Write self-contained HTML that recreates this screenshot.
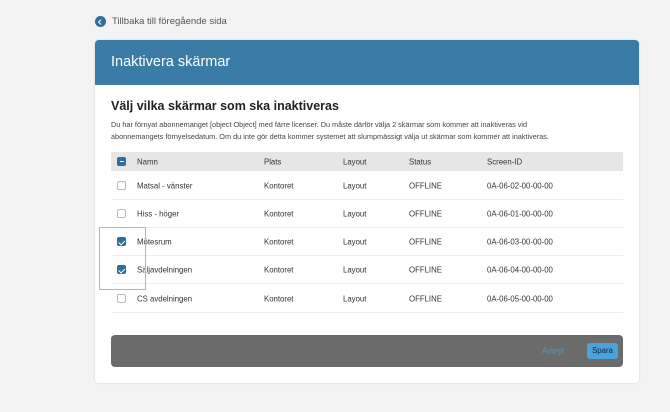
<!DOCTYPE html>
<html><head><meta charset="utf-8"><style>
*{margin:0;padding:0;box-sizing:border-box}
body{width:670px;height:412px;background:#f3f3f3;font-family:"Liberation Sans",sans-serif;position:relative;overflow:hidden;color:#333}
.abs{position:absolute}
.back{left:95px;top:16px;font-size:9.5px;color:#555;display:flex;align-items:center}
.back i{display:inline-block;width:11px;height:11px;border-radius:50%;background:#2f6f9a;margin-right:6px;position:relative}
.card{left:95px;top:40px;width:544px;height:343px;background:#fff;border-radius:4px;box-shadow:0 0 2px rgba(0,0,0,.15)}
.hdr{left:0;top:0;width:544px;height:45px;background:#3a7ca5;border-radius:4px 4px 0 0;color:#fff;font-size:14.5px;padding:14px 0 0 16px}
h2{position:absolute;left:16px;top:59px;font-size:12.5px;font-weight:bold;color:#222}
.p{left:16px;top:79px;width:492px;font-size:7.3px;line-height:12px;color:#444}
.th{left:16px;top:112px;width:512px;height:19px;background:#e6e6e6}
.row{left:16px;width:512px;height:28px;border-bottom:1px solid #eee}
.c{position:absolute;font-size:7.8px;top:50%;transform:translateY(-50%);white-space:nowrap}
.cb{position:absolute;left:6px;top:50%;margin-top:-4.5px;width:9px;height:9px;border:1px solid #bbb;border-radius:2px;background:#fff}
.cb.on{background:#2f6f9a;border-color:#2f6f9a}
.cb.on:after{content:"";position:absolute;left:2px;top:0.5px;width:2.5px;height:4.5px;border:solid #fff;border-width:0 1.3px 1.3px 0;transform:rotate(45deg)}
.cb.mi{background:#2f6f9a;border-color:#2f6f9a}
.cb.mi:after{content:"";position:absolute;left:1.5px;top:3px;width:4px;height:1.3px;background:#fff}
.foot{left:16px;top:295px;width:512px;height:32px;background:#6b6b6b;border-radius:4px}
</style></head><body>
<div class="abs back"><i><span style="position:absolute;left:3.5px;top:3.5px;width:3.5px;height:3.5px;border:solid #fff;border-width:0 0 1.3px 1.3px;transform:rotate(45deg)"></span></i>Tillbaka till föregående sida</div>
<div class="abs card">
<div class="abs hdr">Inaktivera skärmar</div>
<h2>Välj vilka skärmar som ska inaktiveras</h2>
<div class="abs p">Du har förnyat abonnemanget [object Object] med färre licenser. Du måste därför välja 2 skärmar som kommer att inaktiveras vid<br>abonnemangets förnyelsedatum. Om du inte gör detta kommer systemet att slumpmässigt välja ut skärmar som kommer att inaktiveras.</div>
<div class="abs th"><span class="cb mi"></span><span class="c" style="left:26px">Namn</span><span class="c" style="left:153px">Plats</span><span class="c" style="left:232px">Layout</span><span class="c" style="left:298px">Status</span><span class="c" style="left:376px">Screen-ID</span></div>
<div class="abs row" style="top:132px"><span class="cb"></span><span class="c" style="left:26px">Matsal - vänster</span><span class="c" style="left:153px">Kontoret</span><span class="c" style="left:232px">Layout</span><span class="c" style="left:298px">OFFLINE</span><span class="c" style="left:376px">0A-06-02-00-00-00</span></div>
<div class="abs row" style="top:160px"><span class="cb"></span><span class="c" style="left:26px">Hiss - höger</span><span class="c" style="left:153px">Kontoret</span><span class="c" style="left:232px">Layout</span><span class="c" style="left:298px">OFFLINE</span><span class="c" style="left:376px">0A-06-01-00-00-00</span></div>
<div class="abs row" style="top:188px"><span class="cb on"></span><span class="c" style="left:26px">Mötesrum</span><span class="c" style="left:153px">Kontoret</span><span class="c" style="left:232px">Layout</span><span class="c" style="left:298px">OFFLINE</span><span class="c" style="left:376px">0A-06-03-00-00-00</span></div>
<div class="abs row" style="top:216px"><span class="cb on"></span><span class="c" style="left:26px">Säljavdelningen</span><span class="c" style="left:153px">Kontoret</span><span class="c" style="left:232px">Layout</span><span class="c" style="left:298px">OFFLINE</span><span class="c" style="left:376px">0A-06-04-00-00-00</span></div>
<div class="abs row" style="top:245px"><span class="cb"></span><span class="c" style="left:26px">CS avdelningen</span><span class="c" style="left:153px">Kontoret</span><span class="c" style="left:232px">Layout</span><span class="c" style="left:298px">OFFLINE</span><span class="c" style="left:376px">0A-06-05-00-00-00</span></div>
<div class="abs foot"><span class="c" style="left:431px;color:#5a97bf">Avbryt</span><span class="abs" style="left:476px;top:8px;width:31px;height:16px;background:#4ba3dc;border-radius:3px;font-size:7.8px;color:#123;text-align:center;line-height:16px">Spara</span></div>
</div>
<div class="abs" style="left:99px;top:227px;width:47px;height:63px;border:1.5px solid #f29a9a"></div>
</body></html>
